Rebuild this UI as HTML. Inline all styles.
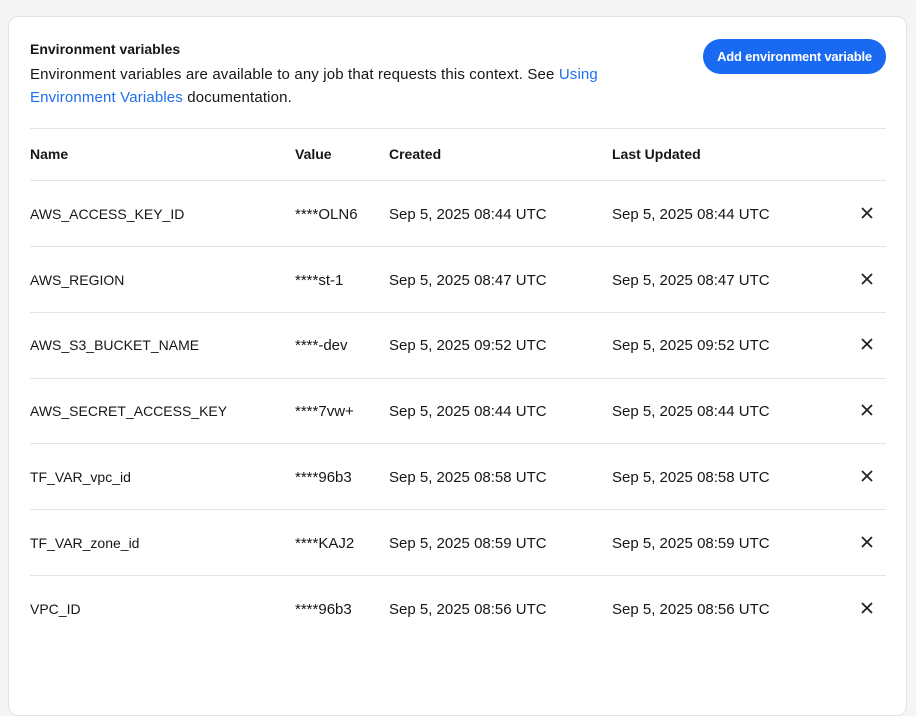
<!DOCTYPE html>
<html><head><meta charset="utf-8"><style>
*{box-sizing:border-box;margin:0;padding:0}
body{width:916px;height:662px;overflow:hidden;background:#f5f5f5;font-family:"Liberation Sans",sans-serif;color:#161616;font-size:14px}
.card{position:absolute;left:8px;top:16px;width:899px;height:700px;background:#fff;border:1px solid #e3e3e3;border-radius:10px}
h1{position:absolute;left:21px;top:24px;font-size:14px;font-weight:bold}
.desc{position:absolute;left:21px;top:46px;line-height:23px;font-size:15px;letter-spacing:0.15px;width:640px}
a{color:#1f6ff0;text-decoration:none}
.btn{position:absolute;left:694px;top:22px;width:183px;height:35px;border-radius:18px;background:#1a69f2;color:#fff;font-size:13px;font-weight:bold;text-align:center;line-height:35px;letter-spacing:-0.2px}
.line{position:absolute;left:21px;width:856px;height:1px;background:#e4e4e4}
.row{position:absolute;left:0;width:899px;height:20px;font-size:15px}
.row span{position:absolute;top:1px;white-space:nowrap}
.row span:first-child{font-size:14px;top:1px}
.hd span{font-weight:bold;font-size:14px;top:0 !important}
.x{position:absolute;left:851px}
</style></head><body>
<div class="card">
<h1>Environment variables</h1>
<div class="desc">Environment variables are available to any job that requests this context. See <a>Using</a><br><a>Environment Variables</a> documentation.</div>
<div class="btn">Add environment variable</div>
<div class="line" style="top:111px"></div>
<div class="row hd" style="top:129px"><span style="left:21px">Name</span><span style="left:286px">Value</span><span style="left:380px">Created</span><span style="left:603px">Last Updated</span></div>
<div class="line" style="top:163px"></div>

<div class="row" style="top:188px"><span style="left:21px">AWS_ACCESS_KEY_ID</span><span style="left:286px">****OLN6</span><span style="left:380px">Sep 5, 2025 08:44 UTC</span><span style="left:603px">Sep 5, 2025 08:44 UTC</span><svg class="x" width="14" height="14" viewBox="0 0 14 14" style="top:1px"><path d="M2 2L12 12M12 2L2 12" stroke="#222" stroke-width="1.8"/></svg></div>
<div class="line" style="top:229px"></div>
<div class="row" style="top:254px"><span style="left:21px">AWS_REGION</span><span style="left:286px">****st-1</span><span style="left:380px">Sep 5, 2025 08:47 UTC</span><span style="left:603px">Sep 5, 2025 08:47 UTC</span><svg class="x" width="14" height="14" viewBox="0 0 14 14" style="top:1px"><path d="M2 2L12 12M12 2L2 12" stroke="#222" stroke-width="1.8"/></svg></div>
<div class="line" style="top:295px"></div>
<div class="row" style="top:319px"><span style="left:21px">AWS_S3_BUCKET_NAME</span><span style="left:286px">****-dev</span><span style="left:380px">Sep 5, 2025 09:52 UTC</span><span style="left:603px">Sep 5, 2025 09:52 UTC</span><svg class="x" width="14" height="14" viewBox="0 0 14 14" style="top:1px"><path d="M2 2L12 12M12 2L2 12" stroke="#222" stroke-width="1.8"/></svg></div>
<div class="line" style="top:361px"></div>
<div class="row" style="top:385px"><span style="left:21px">AWS_SECRET_ACCESS_KEY</span><span style="left:286px">****7vw+</span><span style="left:380px">Sep 5, 2025 08:44 UTC</span><span style="left:603px">Sep 5, 2025 08:44 UTC</span><svg class="x" width="14" height="14" viewBox="0 0 14 14" style="top:1px"><path d="M2 2L12 12M12 2L2 12" stroke="#222" stroke-width="1.8"/></svg></div>
<div class="line" style="top:426px"></div>
<div class="row" style="top:451px"><span style="left:21px">TF_VAR_vpc_id</span><span style="left:286px">****96b3</span><span style="left:380px">Sep 5, 2025 08:58 UTC</span><span style="left:603px">Sep 5, 2025 08:58 UTC</span><svg class="x" width="14" height="14" viewBox="0 0 14 14" style="top:1px"><path d="M2 2L12 12M12 2L2 12" stroke="#222" stroke-width="1.8"/></svg></div>
<div class="line" style="top:492px"></div>
<div class="row" style="top:517px"><span style="left:21px">TF_VAR_zone_id</span><span style="left:286px">****KAJ2</span><span style="left:380px">Sep 5, 2025 08:59 UTC</span><span style="left:603px">Sep 5, 2025 08:59 UTC</span><svg class="x" width="14" height="14" viewBox="0 0 14 14" style="top:1px"><path d="M2 2L12 12M12 2L2 12" stroke="#222" stroke-width="1.8"/></svg></div>
<div class="line" style="top:558px"></div>
<div class="row" style="top:583px"><span style="left:21px">VPC_ID</span><span style="left:286px">****96b3</span><span style="left:380px">Sep 5, 2025 08:56 UTC</span><span style="left:603px">Sep 5, 2025 08:56 UTC</span><svg class="x" width="14" height="14" viewBox="0 0 14 14" style="top:1px"><path d="M2 2L12 12M12 2L2 12" stroke="#222" stroke-width="1.8"/></svg></div>
</div>
</body></html>
